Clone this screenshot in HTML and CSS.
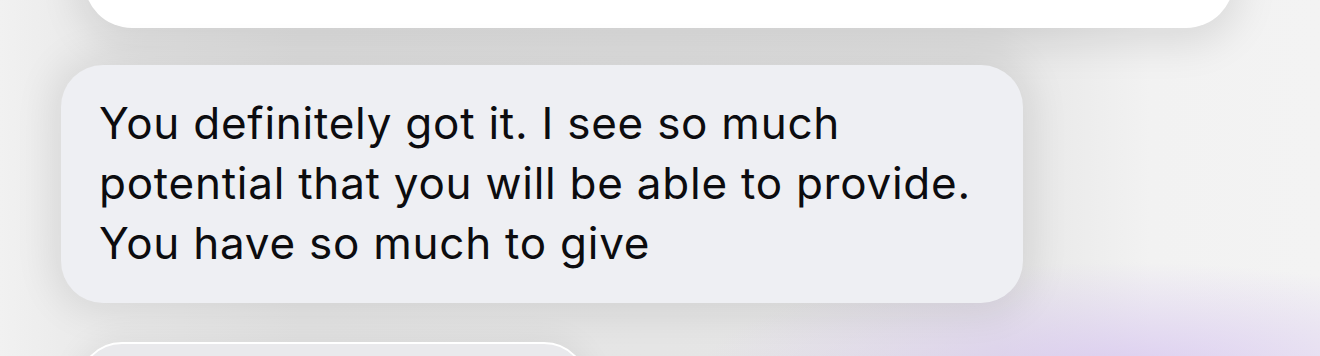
FILE: index.html
```html
<!DOCTYPE html>
<html lang="en">
<head>
<meta charset="utf-8">
<title>Message</title>
<link rel="stylesheet" href="styles.css">
</head>
<body>
<div class="thread">
  <div class="bubble bubble-top"></div>
  <div class="bubble bubble-main">
    <p class="msg">You definitely got it. I see so much potential that you will be able to provide. You have so much to give</p>
  </div>
  <div class="bubble bubble-bottom"></div>
</div>
</body>
</html>
```

FILE: styles.css
```css
html, body {
  margin: 0;
  padding: 0;
}
body {
  width: 1320px;
  height: 356px;
  overflow: hidden;
  background:
    radial-gradient(ellipse 420px 110px at 1120px 372px, rgba(214, 196, 240, 0.8), rgba(214, 196, 240, 0) 100%),
    linear-gradient(90deg, #f1f1f1 0px, #ececec 60px, #e4e4e4 300px, #e6e6e6 1000px, #f2f2f2 1150px, #f3f3f3 1320px);
  font-family: "Inter", "Liberation Sans", sans-serif;
}
.thread {
  display: flex;
  flex-direction: column;
  align-items: flex-start;
  height: 356px;
  overflow: hidden;
}
.bubble {
  box-sizing: border-box;
  flex: none;
}
.bubble-top {
  margin-top: -72px;
  margin-left: 84px;
  width: 1150px;
  height: 100px;
  background: #ffffff;
  border-radius: 48px;
  box-shadow: 0 10px 40px 6px rgba(0, 0, 0, 0.10);
}
.bubble-main {
  margin-top: 37px;
  margin-left: 61px;
  width: 962px;
  height: 238px;
  padding: 28px 30px 30px 38px;
  background: #eeeff3;
  border-radius: 42px;
  box-shadow: 0 0 40px 8px rgba(0, 0, 0, 0.09);
}
.msg {
  margin: 0;
  font-size: 44px;
  line-height: 60px;
  color: #0c0c0f;
  letter-spacing: 0.75px;
}
.bubble-bottom {
  margin-top: 39px;
  margin-left: 78px;
  width: 510px;
  height: 90px;
  background: #e9e9ec;
  border: 2px solid #ffffff;
  border-radius: 44px;
  box-shadow: 0 0 30px 4px rgba(0, 0, 0, 0.06);
}
```
